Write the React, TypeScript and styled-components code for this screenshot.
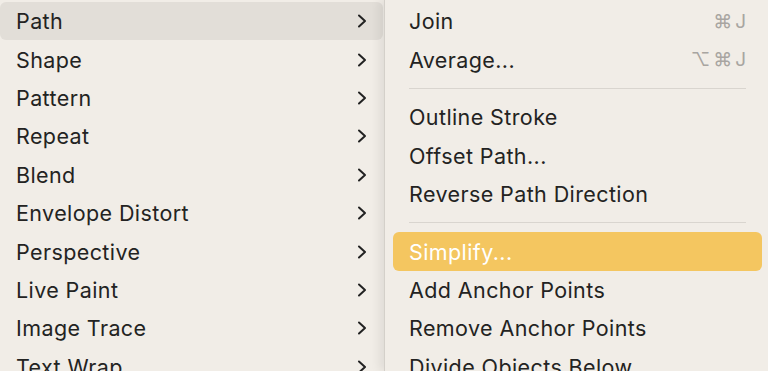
import React from "react";
import styled, { createGlobalStyle } from "styled-components";

const Global = createGlobalStyle`
  html, body { margin: 0; padding: 0; background: #f1ede7; }
  body { font-family: Inter, "Noto Sans", "DejaVu Sans", sans-serif; }
`;

const Screen = styled.div`
  width: 768px;
  height: 371px;
  overflow: hidden;
  display: flex;
  background: #f1ede7;
`;

const LeftMenu = styled.div`
  width: 384px;
  flex: none;
  padding: 2px 1px 0 0;
  box-sizing: border-box;
  display: flex;
  flex-direction: column;
`;

const RightMenu = styled.div`
  flex: 1;
  padding: 2px 6px 0 8px;
  box-sizing: border-box;
  display: flex;
  flex-direction: column;
  border-left: 1px solid #d4d0ca;
  box-shadow: -5px 0 9px rgba(0, 0, 0, 0.07);
  position: relative;
  background: #f1ede7;
`;

const Row = styled.div<{ $tone?: "grey" | "yellow" }>`
  height: 38.4px;
  flex: none;
  display: flex;
  align-items: center;
  justify-content: space-between;
  padding: 0 16px 0 16px;
  border-radius: 6px;
  font-size: 21.5px;
  letter-spacing: 0.4px;
  color: ${(p) => (p.$tone === "yellow" ? "#ffffff" : "#232322")};
  background: ${(p) =>
    p.$tone === "yellow" ? "#f4c660" : p.$tone === "grey" ? "#e2ded8" : "transparent"};
`;

const Label = styled.span`
  white-space: nowrap;
`;

const Shortcut = styled.span`
  color: #a8a5a1;
  font-size: 19px;
  letter-spacing: 3px;
  margin-right: -3px;
  white-space: nowrap;
`;

const Separator = styled.div`
  height: 19.2px;
  flex: none;
  display: flex;
  align-items: center;
  padding: 0 16px;
  &::after {
    content: "";
    flex: 1;
    height: 1.5px;
    background: #d9d5cf;
  }
`;

const Chevron = () => (
  <svg width="10" height="14" viewBox="0 0 10 14">
    <path d="M2 1.5 L8 7 L2 12.5" fill="none" stroke="#222" strokeWidth="2" strokeLinecap="round" strokeLinejoin="round" />
  </svg>
);

const leftItems = [
  "Path",
  "Shape",
  "Pattern",
  "Repeat",
  "Blend",
  "Envelope Distort",
  "Perspective",
  "Live Paint",
  "Image Trace",
  "Text Wrap",
];

type RightItem = { label?: string; shortcut?: string; sep?: boolean; active?: boolean };
const rightItems: RightItem[] = [
  { label: "Join", shortcut: "⌘J" },
  { label: "Average...", shortcut: "⌥⌘J" },
  { sep: true },
  { label: "Outline Stroke" },
  { label: "Offset Path..." },
  { label: "Reverse Path Direction" },
  { sep: true },
  { label: "Simplify...", active: true },
  { label: "Add Anchor Points" },
  { label: "Remove Anchor Points" },
  { label: "Divide Objects Below" },
];

export default function App() {
  return (
    <>
      <Global />
      <Screen>
        <LeftMenu>
          {leftItems.map((l, i) => (
            <Row key={l} $tone={i === 0 ? "grey" : undefined}>
              <Label>{l}</Label>
              <Chevron />
            </Row>
          ))}
        </LeftMenu>
        <RightMenu>
          {rightItems.map((it, i) =>
            it.sep ? (
              <Separator key={i} />
            ) : (
              <Row key={i} $tone={it.active ? "yellow" : undefined}>
                <Label>{it.label}</Label>
                {it.shortcut && <Shortcut>{it.shortcut}</Shortcut>}
              </Row>
            )
          )}
        </RightMenu>
      </Screen>
    </>
  );
}
